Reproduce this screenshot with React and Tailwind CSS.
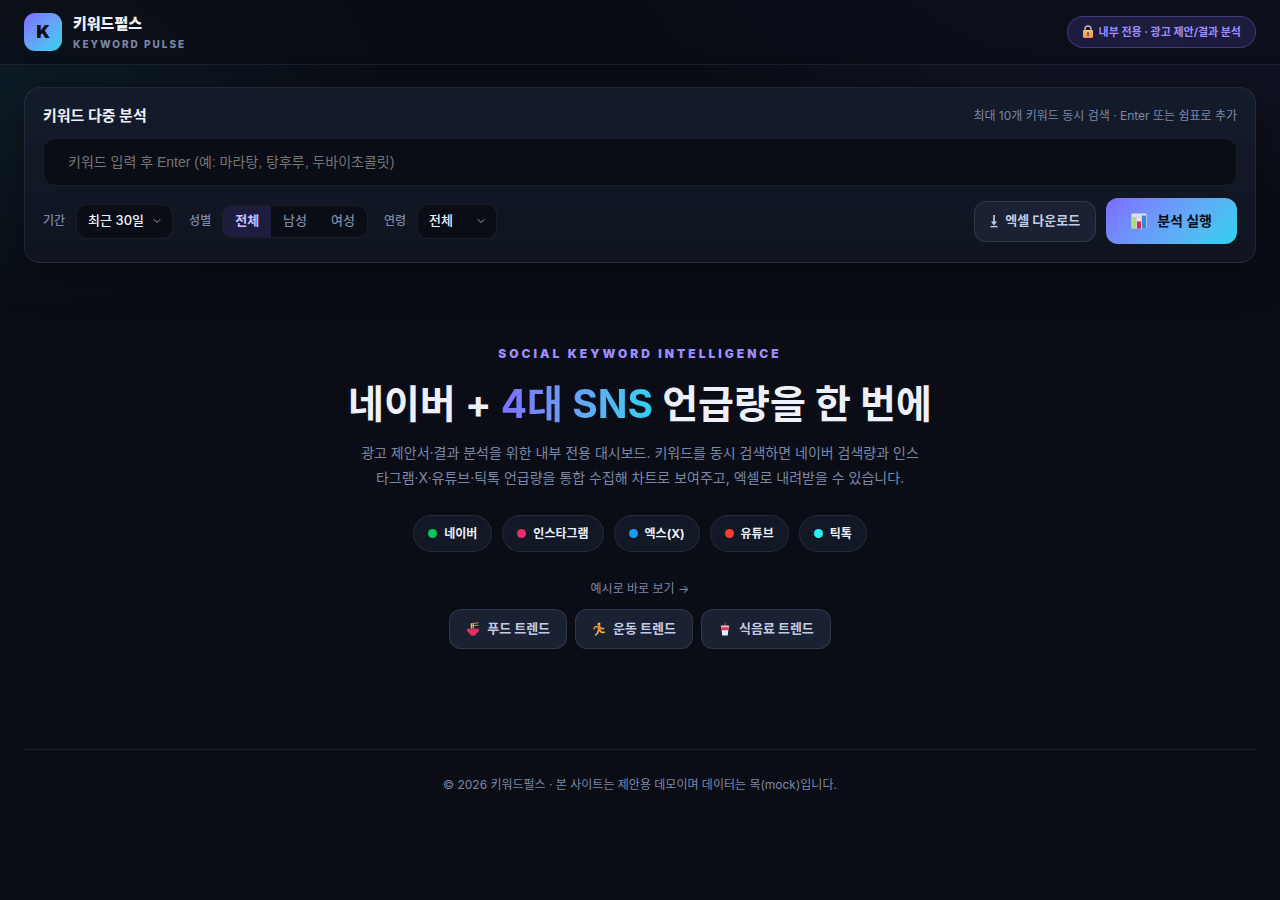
import React, { useState } from 'react';
import { ChevronDown } from 'lucide-react';

const GENDERS = ['전체', '남성', '여성'];

const CHANNELS = [
    { name: '네이버', dot: 'bg-[#03c75a]' },
    { name: '인스타그램', dot: 'bg-[#e1306c]' },
    { name: '엑스(X)', dot: 'bg-[#1d9bf0]' },
    { name: '유튜브', dot: 'bg-[#ff3b30]' },
    { name: '틱톡', dot: 'bg-[#25f4ee]' },
];

const LockIcon = () => (
    <svg width="12" height="14" viewBox="0 0 12 14" aria-hidden="true">
        <defs>
            <linearGradient id="lock-body" x1="0" y1="0" x2="0" y2="1">
                <stop offset="0" stopColor="#ffc65c" />
                <stop offset="1" stopColor="#f08a5c" />
            </linearGradient>
        </defs>
        <path d="M3 6V4a3 3 0 0 1 6 0v2" fill="none" stroke="#b9b3c4" strokeWidth="1.4" />
        <rect x="1" y="5" width="10" height="8" rx="1.3" fill="url(#lock-body)" />
        <circle cx="6" cy="8.3" r="1.1" fill="#4a3044" />
        <path d="M5.5 8.5h1v2.8h-1z" fill="#4a3044" />
    </svg>
);

const ChartIcon = () => (
    <svg width="16" height="16" viewBox="0 0 16 16" aria-hidden="true">
        <rect x="0.5" y="0.5" width="15" height="15" rx="1" fill="#e6e1ea" />
        <path d="M0.5 4.2h15M0.5 8h15M0.5 11.8h15M5.5 0.5v15M10.5 0.5v15" stroke="#c9c1d1" strokeWidth="0.5" />
        <rect x="1" y="4" width="4" height="11.5" fill="#a5e07c" />
        <rect x="6" y="8.5" width="4" height="7" fill="#d8275f" />
        <rect x="11" y="2.5" width="4" height="13" fill="#3489d6" />
    </svg>
);

const NoodleIcon = () => (
    <svg width="14" height="14" viewBox="0 0 14 14" aria-hidden="true">
        <path d="M4.6 2 12.6 0.7M4.6 3.7 12.6 3.3" stroke="#c08a5a" strokeWidth="1" />
        <path d="M5.4 1.6v5.8M7.2 1.4v6" stroke="#f2c877" strokeWidth="1.1" />
        <path d="M1 6.8h12a6 5.4 0 0 1-3.4 5.2v1.5H4.4V12A6 5.4 0 0 1 1 6.8z" fill="#e5325f" />
        <path d="M3.4 6.8h7.2l-.6.9H4z" fill="#b8224c" />
    </svg>
);

const RunnerIcon = () => (
    <svg width="14" height="14" viewBox="0 0 14 14" fill="none" strokeLinecap="round" strokeLinejoin="round" aria-hidden="true">
        <circle cx="7" cy="1.9" r="1.5" fill="#f5b83d" />
        <path d="M5.4 4.6 3 4.8 2 7M8.6 5.2l1.4 1.7 2-.7" stroke="#f5b83d" strokeWidth="1.2" />
        <path d="m6.8 4.8.6 3.2" stroke="#f28a2e" strokeWidth="3" />
        <path d="m8 8.8 1.6 1.6 2.8-.2M6.2 8.8l-.6 2.4L3.6 13" stroke="#f5b83d" strokeWidth="1.5" />
    </svg>
);

const CupIcon = () => (
    <svg width="14" height="14" viewBox="0 0 14 14" aria-hidden="true">
        <path d="M7 4V1.6L8.2.6" fill="none" stroke="#d8305a" strokeWidth="1" />
        <path d="M3.4 5h7.2l-.8 8.6H4.2z" fill="#efe9f5" />
        <path d="M3.4 5h7.2l-.3 3.2H3.7z" fill="#e0335f" />
        <rect x="2.8" y="3.6" width="8.4" height="1.6" rx="0.7" fill="#eec5d2" />
    </svg>
);

const PRESETS = [
    { label: '푸드 트렌드', Icon: NoodleIcon },
    { label: '운동 트렌드', Icon: RunnerIcon },
    { label: '식음료 트렌드', Icon: CupIcon },
];

const FilterSelect = ({ id, label, width, options }) => (
    <div className="flex items-center gap-[11px]">
        <label htmlFor={id} className="text-xs font-medium text-[#7c87a8]">{label}</label>
        <div className={`relative ${width}`}>
            <select id={id} className="h-[35px] w-full appearance-none rounded-[10px] border border-white/7 bg-[#0a0d16] pl-[11px] pr-7 text-[13px] font-medium text-[#eef1fb]">
                {options.map(option => <option key={option}>{option}</option>)}
            </select>
            <ChevronDown size={12} className="pointer-events-none absolute right-[10px] top-[11px] text-[#9aa3bd]" />
        </div>
    </div>
);

const Header = () => (
    <header className="border-b border-white/8 bg-[#0a0d16]/70">
        <div className="flex h-16 items-center justify-between px-6">
            <div className="flex items-center gap-[11px]">
                <div className="flex size-[38px] items-center justify-center rounded-[11px] bg-linear-135 from-[#7c6cff] to-[#22d3ee] text-lg font-black text-[#0a0d16]">K</div>
                <div>
                    <div className="text-[15px] leading-6 font-black">키워드펄스</div>
                    <div className="text-[10px] leading-4 font-extrabold tracking-[2px] text-[#7c87a8]">KEYWORD PULSE</div>
                </div>
            </div>
            <div className="flex h-8 items-center gap-[5px] rounded-full border border-[#7c6cff]/35 bg-[#7c6cff]/15 px-[14px] text-[11px] font-bold text-[#9d8cff]">
                <LockIcon />
                내부 전용 · 광고 제안/결과 분석
            </div>
        </div>
    </header>
);

const SearchPanel = () => {
    const [gender, setGender] = useState('전체');

    return (
        <section className="rounded-2xl border border-white/8 bg-linear-to-b from-[#141b2b] to-[#0f1420] px-[18px] pt-4 pb-[18px] shadow-[0_12px_40px_rgba(0,0,0,0.35)]">
            <div className="flex items-center justify-between">
                <h2 className="text-[15px] leading-6 font-bold">키워드 다중 분석</h2>
                <span className="text-xs text-[#7c87a8]">최대 10개 키워드 동시 검색 · Enter 또는 쉼표로 추가</span>
            </div>
            <input
                type="text"
                aria-label="키워드"
                placeholder="키워드 입력 후 Enter (예: 마라탕, 탕후루, 두바이초콜릿)"
                className="mt-[10px] block h-12 w-full rounded-xl border border-white/7 bg-[#0a0d16] px-6 font-['Liberation_Sans','Noto_Sans_CJK_KR',sans-serif] text-sm placeholder:text-[#757575]"
            />
            <div className="mt-3 flex flex-wrap items-center justify-between gap-3">
                <div className="flex flex-wrap items-center gap-4">
                    <FilterSelect id="period" label="기간" width="w-[97px]" options={['최근 30일', '최근 7일', '최근 90일']} />
                    <div className="flex items-center gap-[11px]">
                        <span id="gender-label" className="text-xs font-medium text-[#7c87a8]">성별</span>
                        <div role="group" aria-labelledby="gender-label" className="flex h-[33px] overflow-hidden rounded-[10px] border border-white/7 bg-[#0a0d16]">
                            {GENDERS.map(item => (
                                <button key={item} type="button" onClick={() => setGender(item)} className={`px-3 text-[13px] ${gender === item ? 'bg-[#7c6cff]/18 font-bold text-[#c9c0ff]' : 'font-medium text-[#7c87a8]'}`}>{item}</button>
                            ))}
                        </div>
                    </div>
                    <FilterSelect id="age" label="연령" width="w-20" options={['전체', '10대', '20대', '30대', '40대']} />
                </div>
                <div className="flex items-center gap-[10px]">
                    <button type="button" className="flex h-[41px] items-center gap-[7px] rounded-xl border border-white/10 bg-[#1a2133] px-[15px] text-[13px] font-bold text-[#c3cbe4]">
                        <svg width="8" height="13" viewBox="0 0 8 13" fill="none" stroke="currentColor" aria-hidden="true">
                            <path d="M4 0v9" strokeWidth="1.7" />
                            <path d="M1 6.6h6L4 10.4z" fill="currentColor" stroke="none" />
                            <path d="M0.5 11.6h7" strokeWidth="1.4" />
                        </svg>
                        엑셀 다운로드
                    </button>
                    <button type="button" className="flex h-[46px] items-center gap-[10px] rounded-xl bg-linear-135 from-[#7c6cff] to-[#22d3ee] px-[25px] text-sm font-bold text-[#0a0d16]">
                        <ChartIcon />
                        분석 실행
                    </button>
                </div>
            </div>
        </section>
    );
};

const Hero = () => (
    <section className="flex flex-col items-center pt-[81px] text-center">
        <p className="text-xs leading-5 font-black tracking-[3px] text-[#9d8cff]">SOCIAL KEYWORD INTELLIGENCE</p>
        <h1 className="mt-[13px] text-[39px] leading-[54px] font-bold">
            네이버 + <span className="bg-linear-100 from-[#7c6cff] to-[#22d3ee] bg-clip-text text-transparent">4대 SNS</span> 언급량을 한 번에
        </h1>
        <p className="mt-[9px] max-w-[560px] text-sm leading-[25px] text-[#7c87a8]">
            광고 제안서·결과 분석을 위한 내부 전용 대시보드. 키워드를 동시 검색하면 네이버 검색량과 인스타그램·X·유튜브·틱톡 언급량을 통합 수집해 차트로 보여주고, 엑셀로 내려받을 수 있습니다.
        </p>
        <ul className="mt-[25px] flex flex-wrap justify-center gap-[10px]">
            {CHANNELS.map(channel => (
                <li key={channel.name} className="flex h-[37px] items-center gap-[7px] rounded-full border border-white/8 bg-[#121826] px-[14px] text-xs font-bold">
                    <span className={`size-[9px] rounded-full ${channel.dot}`} />
                    {channel.name}
                </li>
            ))}
        </ul>
        <p className="mt-7 text-xs leading-[18px] text-[#7c87a8]">예시로 바로 보기 →</p>
        <div className="mt-[11px] flex flex-wrap justify-center gap-2">
            {PRESETS.map(({ label, Icon }) => (
                <button key={label} type="button" className="flex h-10 items-center gap-[7px] rounded-xl border border-white/10 bg-[#1a2133] px-4 text-[13px] font-bold text-[#c3cbe4]">
                    <Icon />
                    {label}
                </button>
            ))}
        </div>
    </section>
);

const App = () => (
    <div className="min-h-screen bg-[#0a0d16] bg-[radial-gradient(900px_500px_at_90%_-10%,rgba(124,108,255,0.12),transparent_60%),radial-gradient(700px_400px_at_0%_10%,rgba(34,211,238,0.07),transparent_55%)] font-[Inter,'Noto_Sans_CJK_KR',sans-serif] text-[#eef1fb]">
        <Header />
        <main className="px-6 pt-[22px]">
            <SearchPanel />
            <Hero />
        </main>
        <footer className="mx-6 mt-[100px] border-t border-white/8 pt-[26px] text-center text-xs leading-[18px] text-[#7c87a8]">
            © 2026 키워드펄스 · 본 사이트는 제안용 데모이며 데이터는 목(mock)입니다.
        </footer>
    </div>
);

export default App;
